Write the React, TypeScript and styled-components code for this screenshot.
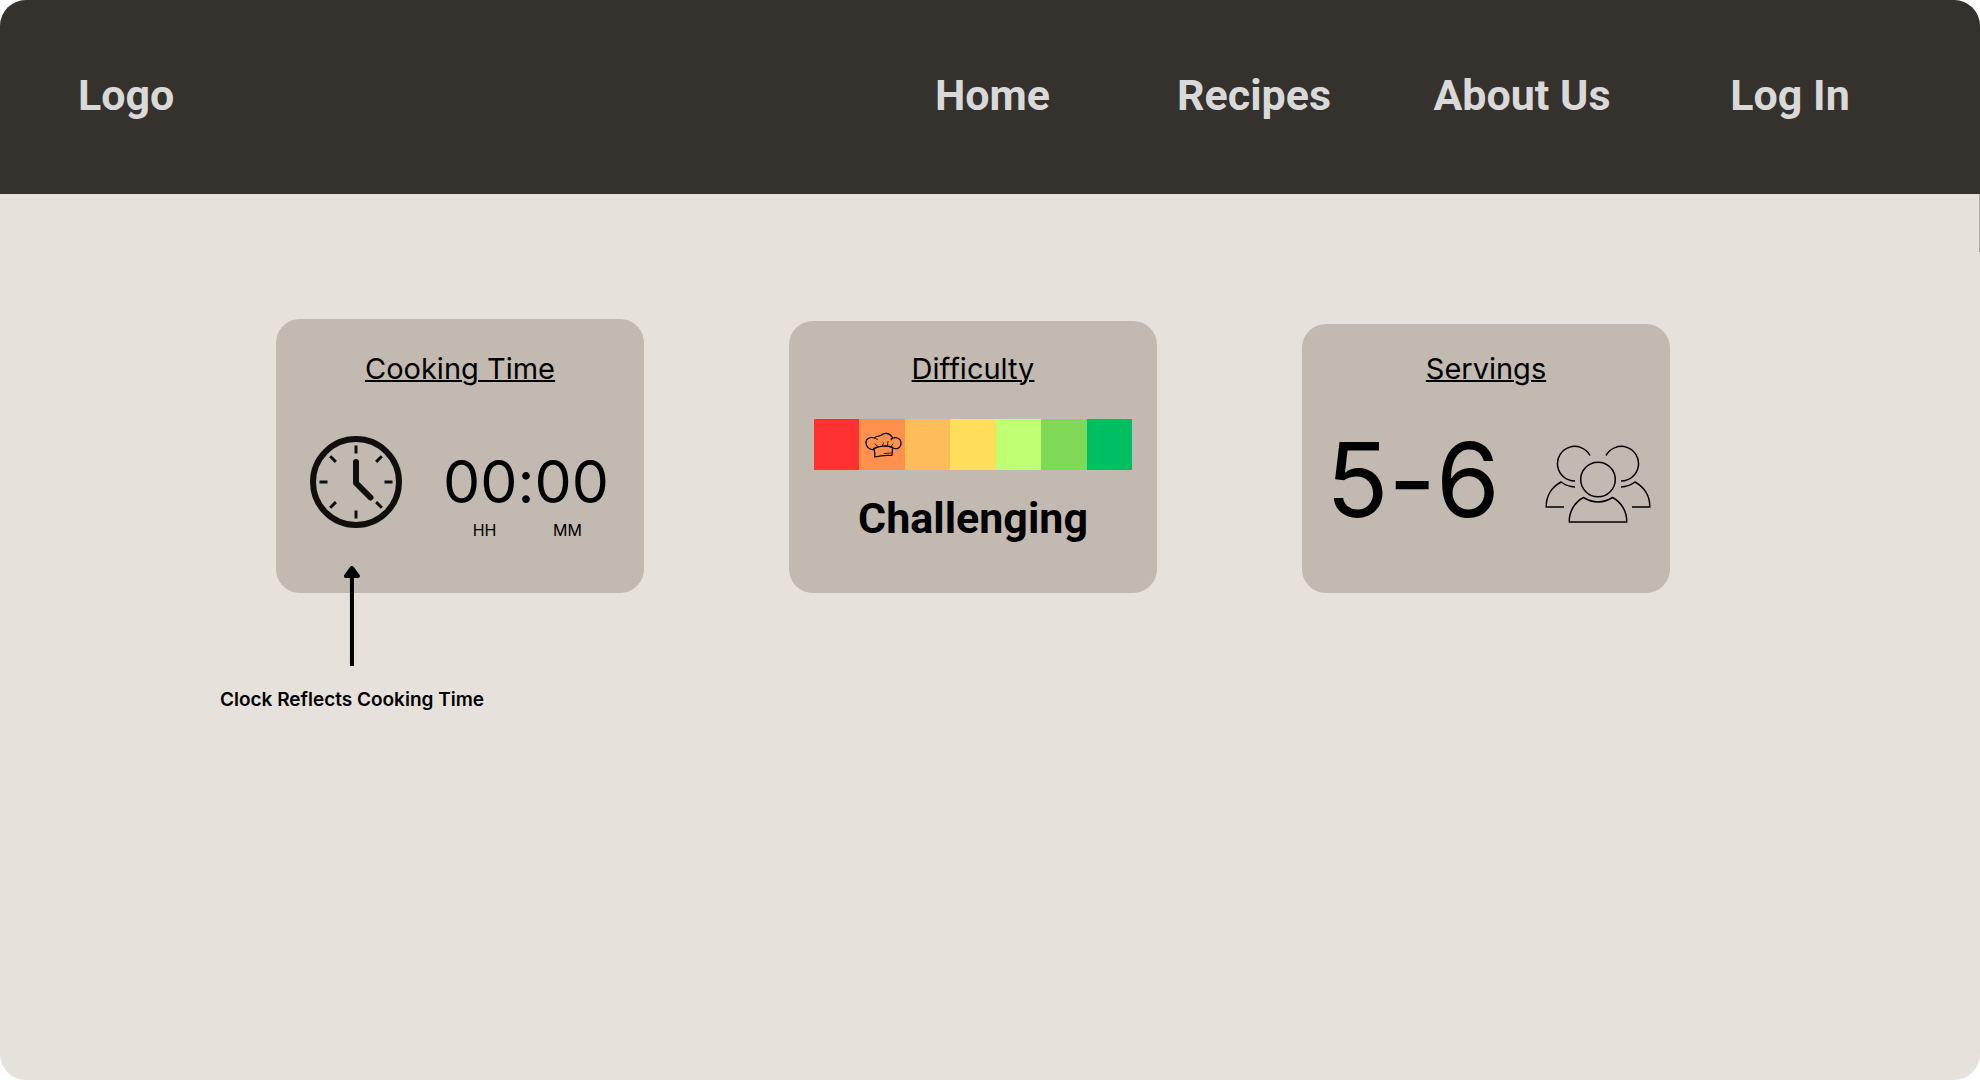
import React from "react";
import styled, { createGlobalStyle } from "styled-components";

const GlobalStyle = createGlobalStyle`
  * { box-sizing: border-box; }
  body { margin: 0; background: #ffffff; color: #000000; font-family: Inter, "Liberation Sans", sans-serif; }
  h2, p { margin: 0; font-weight: 400; }
`;

const Page = styled.div`
  display: flex;
  flex-direction: column;
  min-height: 100vh;
  border-radius: 26px;
  overflow: hidden;
  background: #e6e1db;
`;

const Header = styled.header`
  display: flex;
  align-items: center;
  justify-content: space-between;
  padding: 63px 56px 67px 78px;
  background: #35312c;
`;

const HeaderLink = styled.a`
  color: #d9d9d9;
  font: 700 43px/64px Roboto, "Liberation Sans", sans-serif;
  text-align: center;
  text-decoration: none;
  white-space: nowrap;
`;

const Nav = styled.nav`
  display: grid;
  grid-template-columns: 255px 268px 268px 268px;
`;

const Cards = styled.main`
  position: relative;
  display: grid;
  grid-template-columns: repeat(3, minmax(0, 1fr));
  align-items: end;
  gap: 145px;
  padding: 125px 310px 0 276px;

  &::after {
    content: "";
    position: absolute;
    top: 0;
    right: 0;
    width: 1px;
    height: 58px;
    background: #aaa6a1;
  }
`;

const Card = styled.section<{ $top: number }>`
  position: relative;
  padding-top: ${(p) => p.$top}px;
  border-radius: 24px;
  background: #c2b9b0;
`;

const CardTitle = styled.h2`
  font-size: 29px;
  line-height: 36px;
  text-align: center;
  text-decoration: underline;
  text-decoration-thickness: 2px;
`;

const CardBody = styled.div`
  height: 206px;
`;

const TimeBody = styled(CardBody)`
  display: flex;
  align-items: flex-start;
  justify-content: space-between;
  padding: 49px 35px 0 34px;
`;

const Readout = styled.div`
  display: grid;
  grid-template-columns: 1fr 1fr;
  padding-top: 10px;
  text-align: center;
`;

const Digits = styled.p`
  grid-column: 1 / -1;
  font-size: 59px;
  line-height: 72px;
  font-feature-settings: "calt" 0;
`;

const Unit = styled.span`
  font-size: 16px;
  line-height: 24px;
`;

const LevelBody = styled(CardBody)`
  display: flex;
  flex-direction: column;
  gap: 22px;
  padding: 32px 25px 0;
`;

const Scale = styled.div`
  display: grid;
  grid-template-columns: repeat(7, 1fr);
  height: 51px;
`;

const Step = styled.div<{ $color: string }>`
  display: flex;
  align-items: center;
  justify-content: flex-end;
  padding-right: 3px;
  background: ${(p) => p.$color};
`;

const Level = styled.p`
  font: 700 43px/52px Roboto, "Liberation Sans", sans-serif;
  text-align: center;
`;

const ServingsBody = styled(CardBody)`
  display: flex;
  align-items: flex-start;
  justify-content: space-between;
  padding: 30px 19px 0 24px;
`;

const Amount = styled.p`
  font-size: 103px;
  line-height: 126px;
  font-feature-settings: "calt" 0;
`;

const PeopleIcon = styled.svg`
  margin-top: 28px;
`;

const Note = styled.aside`
  position: absolute;
  top: 247px;
  left: 76px;
  display: flex;
  flex-direction: column;
  align-items: center;
  gap: 22px;
  transform: translateX(-50%);
  font-size: 19px;
  font-weight: 600;
  line-height: 24px;
  white-space: nowrap;
`;

const navItems = ["Home", "Recipes", "About Us", "Log In"];

const levels = ["#ff3131", "#ff914d", "#ffbd59", "#ffde59", "#c1ff72", "#7ed957", "#00bf63"];

const Clock = () => (
  <svg width="92" height="92" viewBox="0 0 92 92" fill="none" stroke="#100f0d" aria-hidden="true">
    <circle cx="46" cy="46" r="43" strokeWidth="6" />
    {[0, 45, 90, 135, 180, 225, 270, 315].map((angle) => (
      <path key={angle} d="M46 9.5v8" strokeWidth="3" transform={`rotate(${angle} 46 46)`} />
    ))}
    <path d="M46 26v21l14.5 14.5" strokeWidth="6" strokeLinecap="round" strokeLinejoin="round" />
  </svg>
);

const ChefHat = () => (
  <svg width="37" height="26" viewBox="0 0 37 26" fill="none" stroke="#000" strokeLinecap="round" strokeLinejoin="round" aria-hidden="true">
    <path d="M8.5 17.5C4 18 1 14.5 1 10.5C1 6.5 5 4.5 9.5 6C11 3.5 14 5 16.5 3C19 .7 24 .2 27.5 5.5" strokeWidth="1.2" />
    <path d="M26 7C30 4 36 6 36 11C36 15.5 32 18 28 16" strokeWidth="1.2" />
    <path d="M9 16.5C14 13.5 22 13.5 27.5 15.5" strokeWidth="1.5" />
    <path d="M9 17C10 20 10 22 9.7 25C15 23.5 21 23 27 23.5C27.5 21 27.2 18 27.5 16" strokeWidth="1.2" />
    <path d="M9.5 6L12.5 7.5M27.5 5.5L26.5 8M10 12L13 14.5M17.5 13.5L18.5 11M22.5 13L23 9.5M26 14.5L28 12M19 21.5L26 21" strokeWidth=".8" />
  </svg>
);

const People = () => (
  <PeopleIcon width="106" height="78" viewBox="0 0 106 78" fill="none" stroke="#000" strokeWidth="1.5" aria-hidden="true">
    <circle cx="53" cy="34.5" r="17.3" />
    <path d="M38.5 52.5Q53 61.5 67.5 52.5C76 57 82 66 81.7 77H24.3C24 66 30 57 38.5 52.5Z" />
    <path d="M45 10.5A17.3 17.3 0 1 0 30 36M30 42Q22 41.5 16 37C7 42 1 51 1.2 62H19" />
    <path d="M61 10.5A17.3 17.3 0 1 1 76 36M76 42Q84 41.5 90 37C99 42 105 51 104.8 62H87" />
  </PeopleIcon>
);

const Arrow = () => (
  <svg width="16" height="100" viewBox="0 0 16 100" aria-hidden="true">
    <path d="M8 8V100" stroke="#000" strokeWidth="4" />
    <path d="M8 2L14 10H2Z" fill="#000" stroke="#000" strokeWidth="4" strokeLinejoin="round" />
  </svg>
);

export default function App() {
  return (
    <Page>
      <GlobalStyle />
      <Header>
        <HeaderLink href="#">Logo</HeaderLink>
        <Nav>
          {navItems.map((item) => (
            <HeaderLink href="#" key={item}>{item}</HeaderLink>
          ))}
        </Nav>
      </Header>
      <Cards>
        <Card $top={32}>
          <CardTitle>Cooking Time</CardTitle>
          <TimeBody>
            <Clock />
            <Readout>
              <Digits>00:00</Digits>
              <Unit>HH</Unit>
              <Unit>MM</Unit>
            </Readout>
          </TimeBody>
          <Note>
            <Arrow />
            Clock Reflects Cooking Time
          </Note>
        </Card>
        <Card $top={30}>
          <CardTitle>Difficulty</CardTitle>
          <LevelBody>
            <Scale>
              {levels.map((color, i) => (
                <Step key={color} $color={color}>{i === 1 && <ChefHat />}</Step>
              ))}
            </Scale>
            <Level>Challenging</Level>
          </LevelBody>
        </Card>
        <Card $top={27}>
          <CardTitle>Servings</CardTitle>
          <ServingsBody>
            <Amount>5-6</Amount>
            <People />
          </ServingsBody>
        </Card>
      </Cards>
    </Page>
  );
}
